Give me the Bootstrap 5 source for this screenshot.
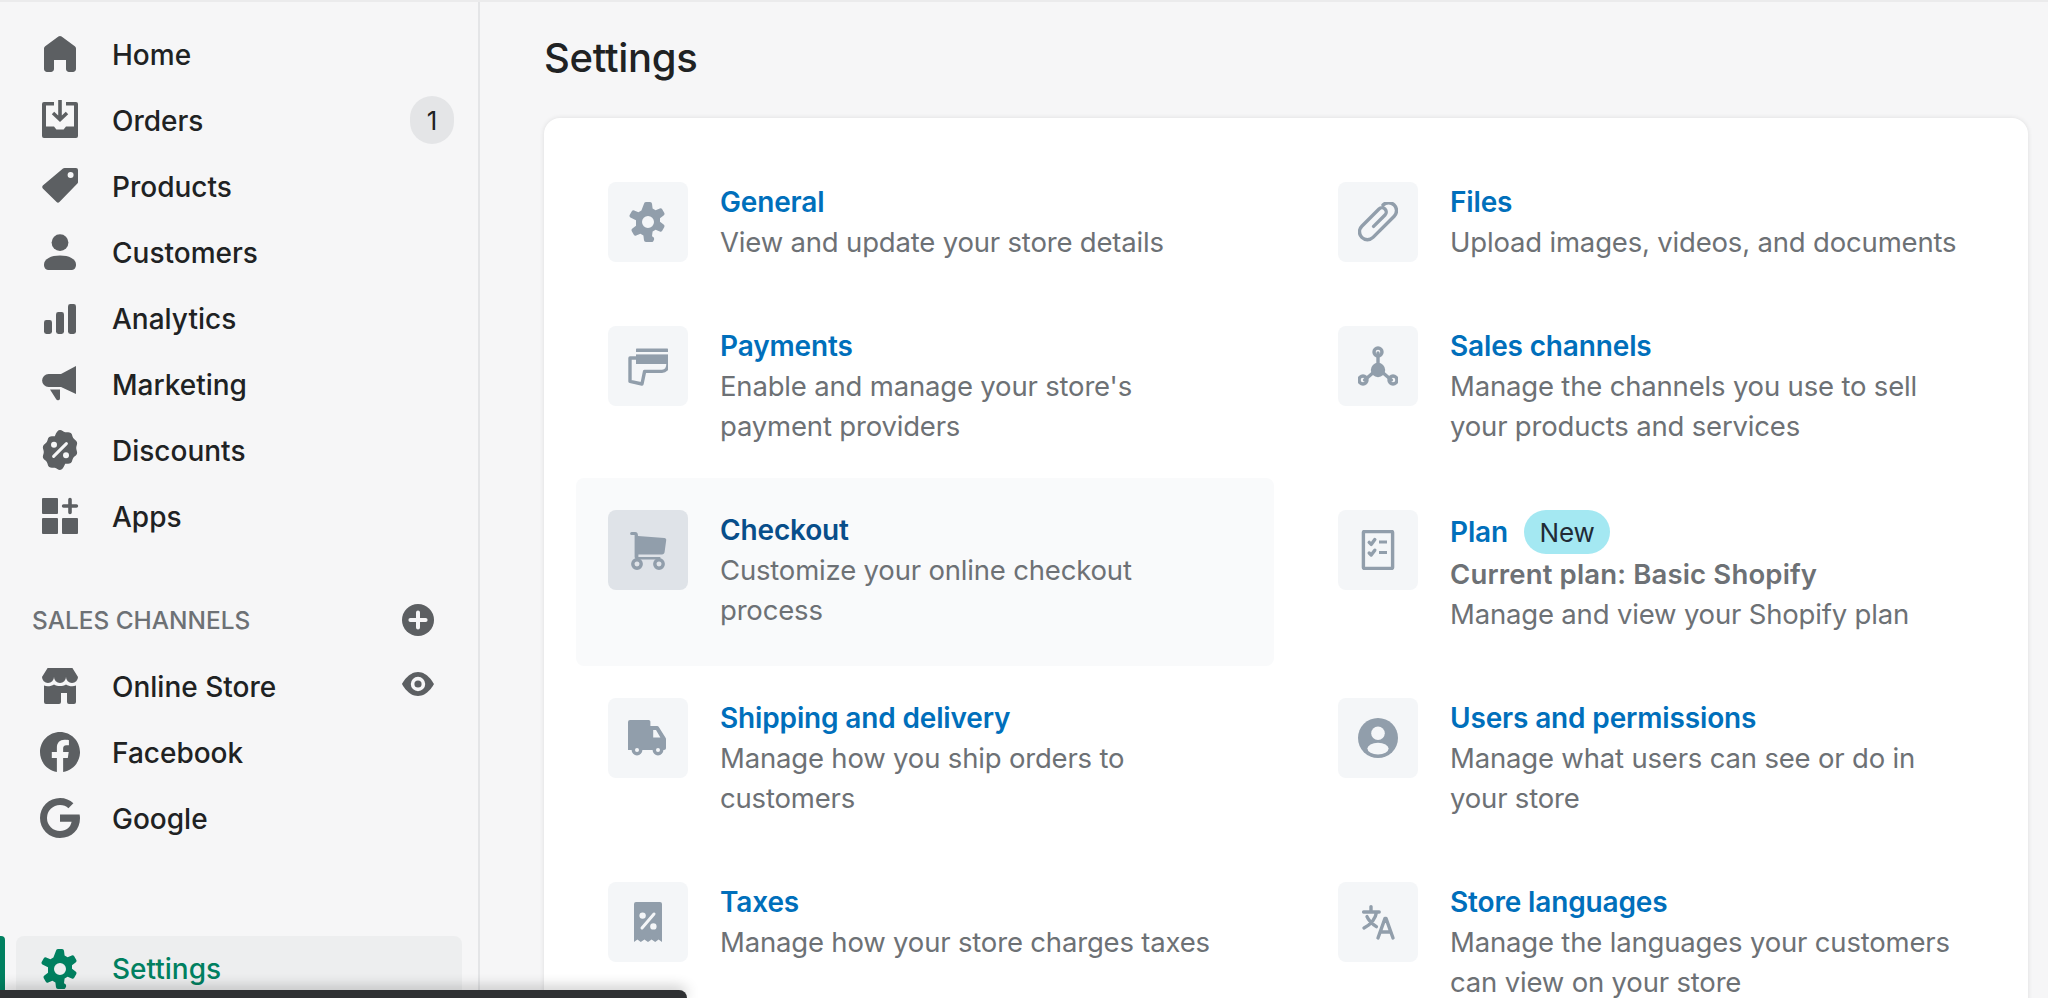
<!DOCTYPE html>
<html lang="en">
<head>
  <meta charset="UTF-8">
  <meta name="viewport" content="width=device-width, initial-scale=1.0">
  <title>Settings</title>
  <link href="https://cdn.jsdelivr.net/npm/bootstrap@5.3.2/dist/css/bootstrap.min.css" rel="stylesheet">
  <style>
    body { background: #f6f6f7; font-family: Inter, "Liberation Sans", sans-serif; color: #202223; }
    .page-wrap { border-top: 2px solid #ebebec; }
    .side-panel { width: 480px; flex: none; border-right: 2px solid #e4e5e7; padding-top: 19px; }
    .side-link { height: 66px; padding: 2px 24px 0 40px; gap: 32px; font-size: 28px; font-weight: 500; color: #202223; position: relative; }
    .side-link:hover, .side-link:focus { color: #202223; }
    .side-link svg { flex: none; margin-top: -2px; }
    .nav-ico { width: 40px; height: 40px; fill: #5c5f62; }
    .count-pill { width: 44px; height: 48px; margin-top: -2px; border-radius: 24px; background: #e4e5e7; font-size: 26px; font-weight: 400; }
    .channels-head { height: 66px; margin-top: 38px; padding: 0 40px 0 32px; font-size: 24.4px; font-weight: 500; color: #6d7175; }
    .side-link.is-active { height: 66px; margin: 85px 16px 0 16px; padding-top: 0; padding-left: 24px; background: #edeeef; border-radius: 8px; color: #008060; }
    .side-link.is-active:hover { color: #008060; }
    .side-link.is-active svg { fill: #008060; margin-top: 0; }
    .active-bar { position: absolute; left: -16px; top: 0; bottom: 0; width: 5px; background: #008060; border-radius: 0 4px 4px 0; }
    .toast-edge { width: 687px; height: 8px; background: #2f3133; border-top-right-radius: 8px; box-shadow: 0 -2px 14px rgba(0,0,0,.3); }
    .main-area { padding: 0 20px 0 64px; min-width: 0; }
    .page-title { font-size: 40px; line-height: 52px; font-weight: 500; letter-spacing: -.3px; margin: 30px 0 34px; color: #202223; }
    .settings-card { border: 0; border-radius: 16px; box-shadow: 0 0 5px rgba(23,24,24,.1); padding: 32px 24px 32px 32px; }
    .settings-row { --bs-gutter-x: 32px; --bs-gutter-y: 0; }
    .setting-item { display: flex; gap: 32px; padding: 32px; border-radius: 8px; text-decoration: none; height: 100%; }
    .setting-item.is-hover { background: #f9fafb; }
    .ico-box { width: 80px; height: 80px; flex: none; background: #f4f6f8; border-radius: 8px; }
    .is-hover .ico-box { background: #dfe3e8; }
    .ico-box svg { width: 40px; height: 40px; fill: #919eab; }
    .ico-stroke { fill: none !important; stroke: #919eab; stroke-width: 1.7; stroke-linecap: round; stroke-linejoin: round; }
    .item-body { max-width: 512px; }
    .item-title { font-size: 28px; line-height: 40px; font-weight: 600; letter-spacing: -.15px; color: #006fbb; }
    .is-hover .item-title { color: #084e8a; }
    .item-text { font-size: 27.5px; line-height: 40px; color: #6d7175; letter-spacing: -.18px; margin: 0; }
    .item-sub { font-weight: 600; letter-spacing: .16px; }
    .new-tag { height: 44px; width: 86px; background: #a4e8f2; color: #212b36; font-size: 26px; font-weight: 400; letter-spacing: -.2px; margin-left: 16px; }
    .plan-head { height: 44px; }
  </style>
</head>
<body class="overflow-hidden">
  <svg class="d-none">
    <symbol id="gear" viewBox="0 0 20 20">
      <path fill-rule="evenodd" d="M8 .9A1 1 0 0 1 9 0h2a1 1 0 0 1 1 .9l.3 2.300 1.500.9 2.100-.9a1 1 0 0 1 1.200.4l1 1.800a1 1 0 0 1-.3 1.300l-1.800 1.400v1.800l1.800 1.400a1 1 0 0 1 .3 1.300l-1 1.800a1 1 0 0 1-1.200.4l-2.100-.9-1.500.9-.3 2.300A1 1 0 0 1 11 20H9a1 1 0 0 1-1-.9l-.3-2.300-1.500-.9-2.100.9a1 1 0 0 1-1.200-.4l-1-1.800a1 1 0 0 1 .3-1.300l1.800-1.400V9.100L1.200 7.700a1 1 0 0 1-.3-1.300l1-1.800a1 1 0 0 1 1.200-.4l2.100.9 1.500-.9zM10 7a3 3 0 1 0 0 6 3 3 0 0 0 0-6z"/>
    </symbol>
  </svg>

  <div class="page-wrap d-flex vh-100 overflow-hidden position-relative">
    <aside class="side-panel">
      <nav class="nav flex-column">
        <a class="nav-link side-link d-flex align-items-center" href="#">
          <svg class="nav-ico" viewBox="0 0 20 20"><path d="M18 7.300v10.200c0 .8-.7 1.500-1.500 1.500h-2c-.8 0-1.500-.7-1.500-1.500V13H7v4.500C7 18.300 6.300 19 5.500 19h-2C2.700 19 2 18.300 2 17.500V7.300a1.500 1.500 0 0 1 .6-1.200l6.600-4.900a1.500 1.500 0 0 1 1.600 0l6.600 4.900a1.500 1.500 0 0 1 .6 1.200z"/></svg>
          Home
        </a>
        <a class="nav-link side-link d-flex align-items-center" href="#">
          <svg class="nav-ico" viewBox="0 0 20 20"><path d="M2 1h5v1.800H3v10.500h4l1.200 1.500h3.600l1.200-1.500h4V2.800h-4V1h5a1 1 0 0 1 1 1v16a1 1 0 0 1-1 1H2a1 1 0 0 1-1-1V2a1 1 0 0 1 1-1z"/><path d="M9.100 0h1.800v7.800l2-1.900 1.200 1.200L10 11 5.900 7.100l1.200-1.200 2 1.900z"/></svg>
          Orders
          <span class="count-pill ms-auto d-flex align-items-center justify-content-center">1</span>
        </a>
        <a class="nav-link side-link d-flex align-items-center" href="#">
          <svg class="nav-ico" viewBox="0 0 20 20"><path fill-rule="evenodd" d="M1.400 9.800 11.500 1.300a1.200 1.200 0 0 1 .8-.3H18a1 1 0 0 1 1 1v6.100a1 1 0 0 1-.3.7L9.700 18a1 1 0 0 1-1.400 0l-6.900-6.800a1 1 0 0 1 0-1.400zM15.300 3a1.500 1.500 0 1 0 0 3 1.500 1.500 0 0 0 0-3z"/></svg>
          Products
        </a>
        <a class="nav-link side-link d-flex align-items-center" href="#">
          <svg class="nav-ico" viewBox="0 0 20 20"><circle cx="10" cy="5.300" r="4.200"/><path d="M2 16.300C2 13.500 5.500 11.800 10 11.800s8 1.700 8 4.500c0 1.600-.8 2.700-2 2.700H4c-1.200 0-2-1.100-2-2.700z"/></svg>
          Customers
        </a>
        <a class="nav-link side-link d-flex align-items-center" href="#">
          <svg class="nav-ico" viewBox="0 0 20 20"><rect x="2" y="11" width="4" height="7" rx="1.200"/><rect x="8" y="7" width="4" height="11" rx="1.200"/><rect x="14" y="3" width="4" height="15" rx="1.200"/></svg>
          Analytics
        </a>
        <a class="nav-link side-link d-flex align-items-center" href="#">
          <svg class="nav-ico" viewBox="0 0 20 20"><path d="M18 1v14l-7.500-3.500H4.300A3.250 3.250 0 0 1 4.300 5h6.200z"/><path d="M5 12.800h5v4.400a1 1 0 0 1-1.900.4z"/></svg>
          Marketing
        </a>
        <a class="nav-link side-link d-flex align-items-center" href="#">
          <svg class="nav-ico" viewBox="0 0 20 20"><path d="M10 0c1 0 1.700.9 2.600 1.100.9.200 2-.200 2.800.4.800.6.700 1.800 1.200 2.500.5.800 1.600 1.200 1.900 2.100.3.900-.4 1.900-.4 2.900s.7 2 .4 2.900c-.3.900-1.400 1.300-1.900 2.100-.5.700-.4 1.900-1.200 2.500-.8.600-1.900.2-2.800.4C11.700 19.100 11 20 10 20s-1.700-.9-2.600-1.100c-.9-.2-2 .2-2.800-.4-.8-.6-.7-1.800-1.200-2.500-.5-.8-1.600-1.200-1.900-2.100-.3-.9.4-1.900.4-2.900s-.7-2-.4-2.900c.3-.9 1.400-1.300 1.900-2.100.5-.7.4-1.900 1.200-2.500.8-.6 1.900-.2 2.800-.4C8.300.9 9 0 10 0z"/><circle cx="7" cy="7.400" r="1.500" fill="#f6f6f7"/><circle cx="13" cy="12.600" r="1.500" fill="#f6f6f7"/><path d="M6.800 13.200 13.200 6.800" stroke="#f6f6f7" stroke-width="1.500" stroke-linecap="round"/></svg>
          Discounts
        </a>
        <a class="nav-link side-link d-flex align-items-center" href="#">
          <svg class="nav-ico" viewBox="0 0 20 20"><rect x="1" y="1" width="8" height="8" rx=".5"/><rect x="1" y="11" width="8" height="8" rx=".5"/><rect x="11" y="11" width="8" height="8" rx=".5"/><path d="M14.100 1.800a.9.9 0 0 1 1.800 0v2.300h2.300a.9.9 0 0 1 0 1.800h-2.300v2.300a.9.9 0 0 1-1.800 0V5.900h-2.300a.9.9 0 0 1 0-1.800h2.300z"/></svg>
          Apps
        </a>
      </nav>

      <div class="channels-head d-flex align-items-center justify-content-between">
        <span>SALES CHANNELS</span>
        <svg class="nav-ico" viewBox="0 0 20 20" role="img"><circle cx="10" cy="10" r="8"/><path d="M10 6.200v7.600M6.200 10h7.600" stroke="#f6f6f7" stroke-width="2" stroke-linecap="round"/></svg>
      </div>

      <nav class="nav flex-column">
        <a class="nav-link side-link d-flex align-items-center" href="#">
          <svg class="nav-ico" viewBox="0 0 20 20"><path d="M3.800 1h12.400L19 5.500a3 3 0 0 1-6 0 3 3 0 0 1-6 0 3 3 0 0 1-6 0z"/><path d="M2 9.800c1.700.6 3.700.3 5-.6 1.800 1.100 4.200 1.100 6 0 1.300.9 3.300 1.200 5 .6V18a1 1 0 0 1-1 1h-2.500a1 1 0 0 1-1-1v-4.500h-3V18a1 1 0 0 1-1 1H3a1 1 0 0 1-1-1z"/></svg>
          Online Store
          <svg class="nav-ico ms-auto me-3 mb-1" viewBox="0 0 20 20"><path fill-rule="evenodd" d="M18 10s-3 6-8 6-8-6-8-6 3-6 8-6 8 6 8 6zM10 6.400a3.600 3.600 0 1 0 0 7.200 3.600 3.600 0 0 0 0-7.200z"/><circle cx="10" cy="10" r="1.800"/></svg>
        </a>
        <a class="nav-link side-link d-flex align-items-center" href="#">
          <svg class="nav-ico" viewBox="0 0 20 20"><path d="M20 10.060C20 4.500 15.520 0 10 0S0 4.500 0 10.060c0 5.020 3.660 9.180 8.440 9.940v-7.030H5.900v-2.910h2.540V7.840c0-2.520 1.490-3.910 3.780-3.910 1.100 0 2.240.2 2.240.2v2.470h-1.260c-1.240 0-1.630.78-1.630 1.570v1.890h2.780l-.45 2.910h-2.330V20c4.780-.76 8.440-4.920 8.440-9.940z"/></svg>
          Facebook
        </a>
        <a class="nav-link side-link d-flex align-items-center" href="#">
          <svg class="nav-ico" viewBox="0 0 20 20"><path d="M10 0c2.700 0 4.960 1 6.700 2.600l-2.500 2.500C13.100 4.100 11.700 3.500 10 3.500a6.500 6.500 0 1 0 0 13c3.100 0 5.200-1.700 5.800-4.600H10V8.200h9.800c.1.600.2 1.200.2 1.800 0 5.800-4 10-10 10a10 10 0 0 1 0-20z"/></svg>
          Google
        </a>
        <a class="nav-link side-link is-active d-flex align-items-center" href="#">
          <span class="active-bar"></span>
          <svg class="nav-ico" viewBox="0 0 20 20"><use href="#gear"/></svg>
          Settings
        </a>
      </nav>
    </aside>

    <main class="main-area flex-grow-1">
      <h1 class="page-title">Settings</h1>
      <div class="card settings-card">
        <div class="row settings-row">
          <div class="col-6">
            <a class="setting-item" href="#">
              <span class="ico-box d-flex align-items-center justify-content-center"><svg viewBox="0 0 20 20"><use href="#gear"/></svg></span>
              <div class="item-body"><div class="item-title">General</div><p class="item-text">View and update your store details</p></div>
            </a>
          </div>
          <div class="col-6">
            <a class="setting-item" href="#">
              <span class="ico-box d-flex align-items-center justify-content-center"><svg viewBox="0 0 20 20"><path class="ico-stroke" d="M7.800 12.200 13.500 6.500a2.100 2.100 0 0 0-3-3L1.900 12.100a3.900 3.900 0 0 0 5.600 5.600l10.600-10.600a3.900 3.900 0 0 0-5.600-5.600"/></svg></span>
              <div class="item-body"><div class="item-title">Files</div><p class="item-text">Upload images, videos, and documents</p></div>
            </a>
          </div>
          <div class="col-6">
            <a class="setting-item" href="#">
              <span class="ico-box d-flex align-items-center justify-content-center"><svg viewBox="0 0 20 20"><path d="M4.500 1.200h15c.3 0 .5.200.5.500V3H4V1.700c0-.3.200-.5.500-.5z"/><path d="M4 4.200h16V9H4z"/><path class="ico-stroke" d="M4 6H1v11.700L7 19l1.300-6.300H17c1.700 0 3-1.300 3-3.700"/></svg></span>
              <div class="item-body"><div class="item-title">Payments</div><p class="item-text">Enable and manage your store's payment providers</p></div>
            </a>
          </div>
          <div class="col-6">
            <a class="setting-item" href="#">
              <span class="ico-box d-flex align-items-center justify-content-center"><svg viewBox="0 0 20 20"><path d="M10 3.500v7M3.300 17 8 13M16.700 17 12 13" class="ico-stroke"/><circle cx="10" cy="12" r="3.600"/><circle cx="10" cy="3" r="2" class="ico-stroke"/><circle cx="2.500" cy="17" r="2" class="ico-stroke"/><circle cx="17.500" cy="17" r="2" class="ico-stroke"/></svg></span>
              <div class="item-body"><div class="item-title">Sales channels</div><p class="item-text">Manage the channels you use to sell your products and services</p></div>
            </a>
          </div>
          <div class="col-6">
            <a class="setting-item is-hover" href="#">
              <span class="ico-box d-flex align-items-center justify-content-center"><svg viewBox="0 0 20 20"><path d="M1.800 1h1.800c.7 0 1.200.4 1.300 1.100l.1.900 13.200 1c.6 0 1 .5.900 1.100L18.300 11c-.1.700-.6 1.200-1.300 1.200H5.200v1.300h11v1.300H4.700c-.8 0-1.400-.6-1.400-1.400V2.500H1.800a.75.750 0 0 1 0-1.500z"/><circle cx="4.500" cy="17" r="2.100" class="ico-stroke"/><circle cx="15.500" cy="17" r="2.100" class="ico-stroke"/></svg></span>
              <div class="item-body"><div class="item-title">Checkout</div><p class="item-text">Customize your online checkout process</p></div>
            </a>
          </div>
          <div class="col-6">
            <a class="setting-item" href="#">
              <span class="ico-box d-flex align-items-center justify-content-center"><svg viewBox="0 0 20 20"><rect x="2.700" y=".8" width="14.600" height="18.400" rx=".4" class="ico-stroke"/><path class="ico-stroke" stroke-width="1.300" d="M5.600 6.200l1 1 1.800-2.400M5.600 11.500l1 1 1.800-2.400"/><path d="M10.500 5.200h4v1.500h-4zM10.500 10.500h4v1.500h-4z"/></svg></span>
              <div class="item-body">
                <div class="plan-head d-flex align-items-center">
                  <span class="item-title">Plan</span>
                  <span class="new-tag rounded-pill d-flex align-items-center justify-content-center">New</span>
                </div>
                <p class="item-text item-sub">Current plan: Basic Shopify</p>
                <p class="item-text">Manage and view your Shopify plan</p>
              </div>
            </a>
          </div>
          <div class="col-6">
            <a class="setting-item" href="#">
              <span class="ico-box d-flex align-items-center justify-content-center"><svg viewBox="0 0 20 20"><path fill-rule="evenodd" d="M1 2a1 1 0 0 1 1-1h9.300c.5 0 .9.400.9.900V4h3.300c.4 0 .7.200.9.500l3.300 5.200c.2.200.3.500.3.800V15c0 .6-.4 1-1 1h-.3a2.700 2.700 0 0 1-5.400 0H8.200a2.700 2.700 0 0 1-5.400 0H1zM13.600 6v3.800h3.600L15 6z" transform="translate(-1 0)"/><circle cx="4.500" cy="16" r="1" fill="#f4f6f8"/><circle cx="15" cy="16" r="1" fill="#f4f6f8"/></svg></span>
              <div class="item-body"><div class="item-title">Shipping and delivery</div><p class="item-text">Manage how you ship orders to customers</p></div>
            </a>
          </div>
          <div class="col-6">
            <a class="setting-item" href="#">
              <span class="ico-box d-flex align-items-center justify-content-center"><svg viewBox="0 0 20 20"><circle cx="10" cy="10" r="10"/><circle cx="10" cy="7.600" r="3.400" fill="#f4f6f8"/><ellipse cx="10" cy="15.300" rx="5.300" ry="2.900" fill="#f4f6f8"/></svg></span>
              <div class="item-body"><div class="item-title">Users and permissions</div><p class="item-text">Manage what users can see or do in your store</p></div>
            </a>
          </div>
          <div class="col-6">
            <a class="setting-item" href="#">
              <span class="ico-box d-flex align-items-center justify-content-center"><svg viewBox="0 0 20 20"><path d="M4 0h12a1 1 0 0 1 1 1v19l-1.700-1.200-1.700 1.200-1.800-1.200-1.800 1.200-1.800-1.200L6.400 20l-1.700-1.200L3 20V1a1 1 0 0 1 1-1z"/><circle cx="7.300" cy="6.800" r="1.600" fill="#f4f6f8"/><circle cx="12.700" cy="12.200" r="1.600" fill="#f4f6f8"/><path d="M7 13 13 6" stroke="#f4f6f8" stroke-width="1.500" stroke-linecap="round"/></svg></span>
              <div class="item-body"><div class="item-title">Taxes</div><p class="item-text">Manage how your store charges taxes</p></div>
            </a>
          </div>
          <div class="col-6">
            <a class="setting-item" href="#">
              <span class="ico-box d-flex align-items-center justify-content-center"><svg viewBox="0 0 20 20"><path class="ico-stroke" stroke-width="2" d="M2.800 5h7.800M6.500 2.300V5M9.300 5C8.800 8 6.800 11 3 13M4.500 7.300c1 2.300 2.800 3.800 4.700 5M10 18l3.500-9.800h.5l3.500 9.800M11.500 15h4.500"/></svg></span>
              <div class="item-body"><div class="item-title">Store languages</div><p class="item-text">Manage the languages your customers can view on your store</p></div>
            </a>
          </div>
        </div>
      </div>
    </main>

    <div class="toast-edge position-absolute bottom-0 start-0"></div>
  </div>
  <script src="https://cdn.jsdelivr.net/npm/bootstrap@5.3.2/dist/js/bootstrap.bundle.min.js"></script>
</body>
</html>
